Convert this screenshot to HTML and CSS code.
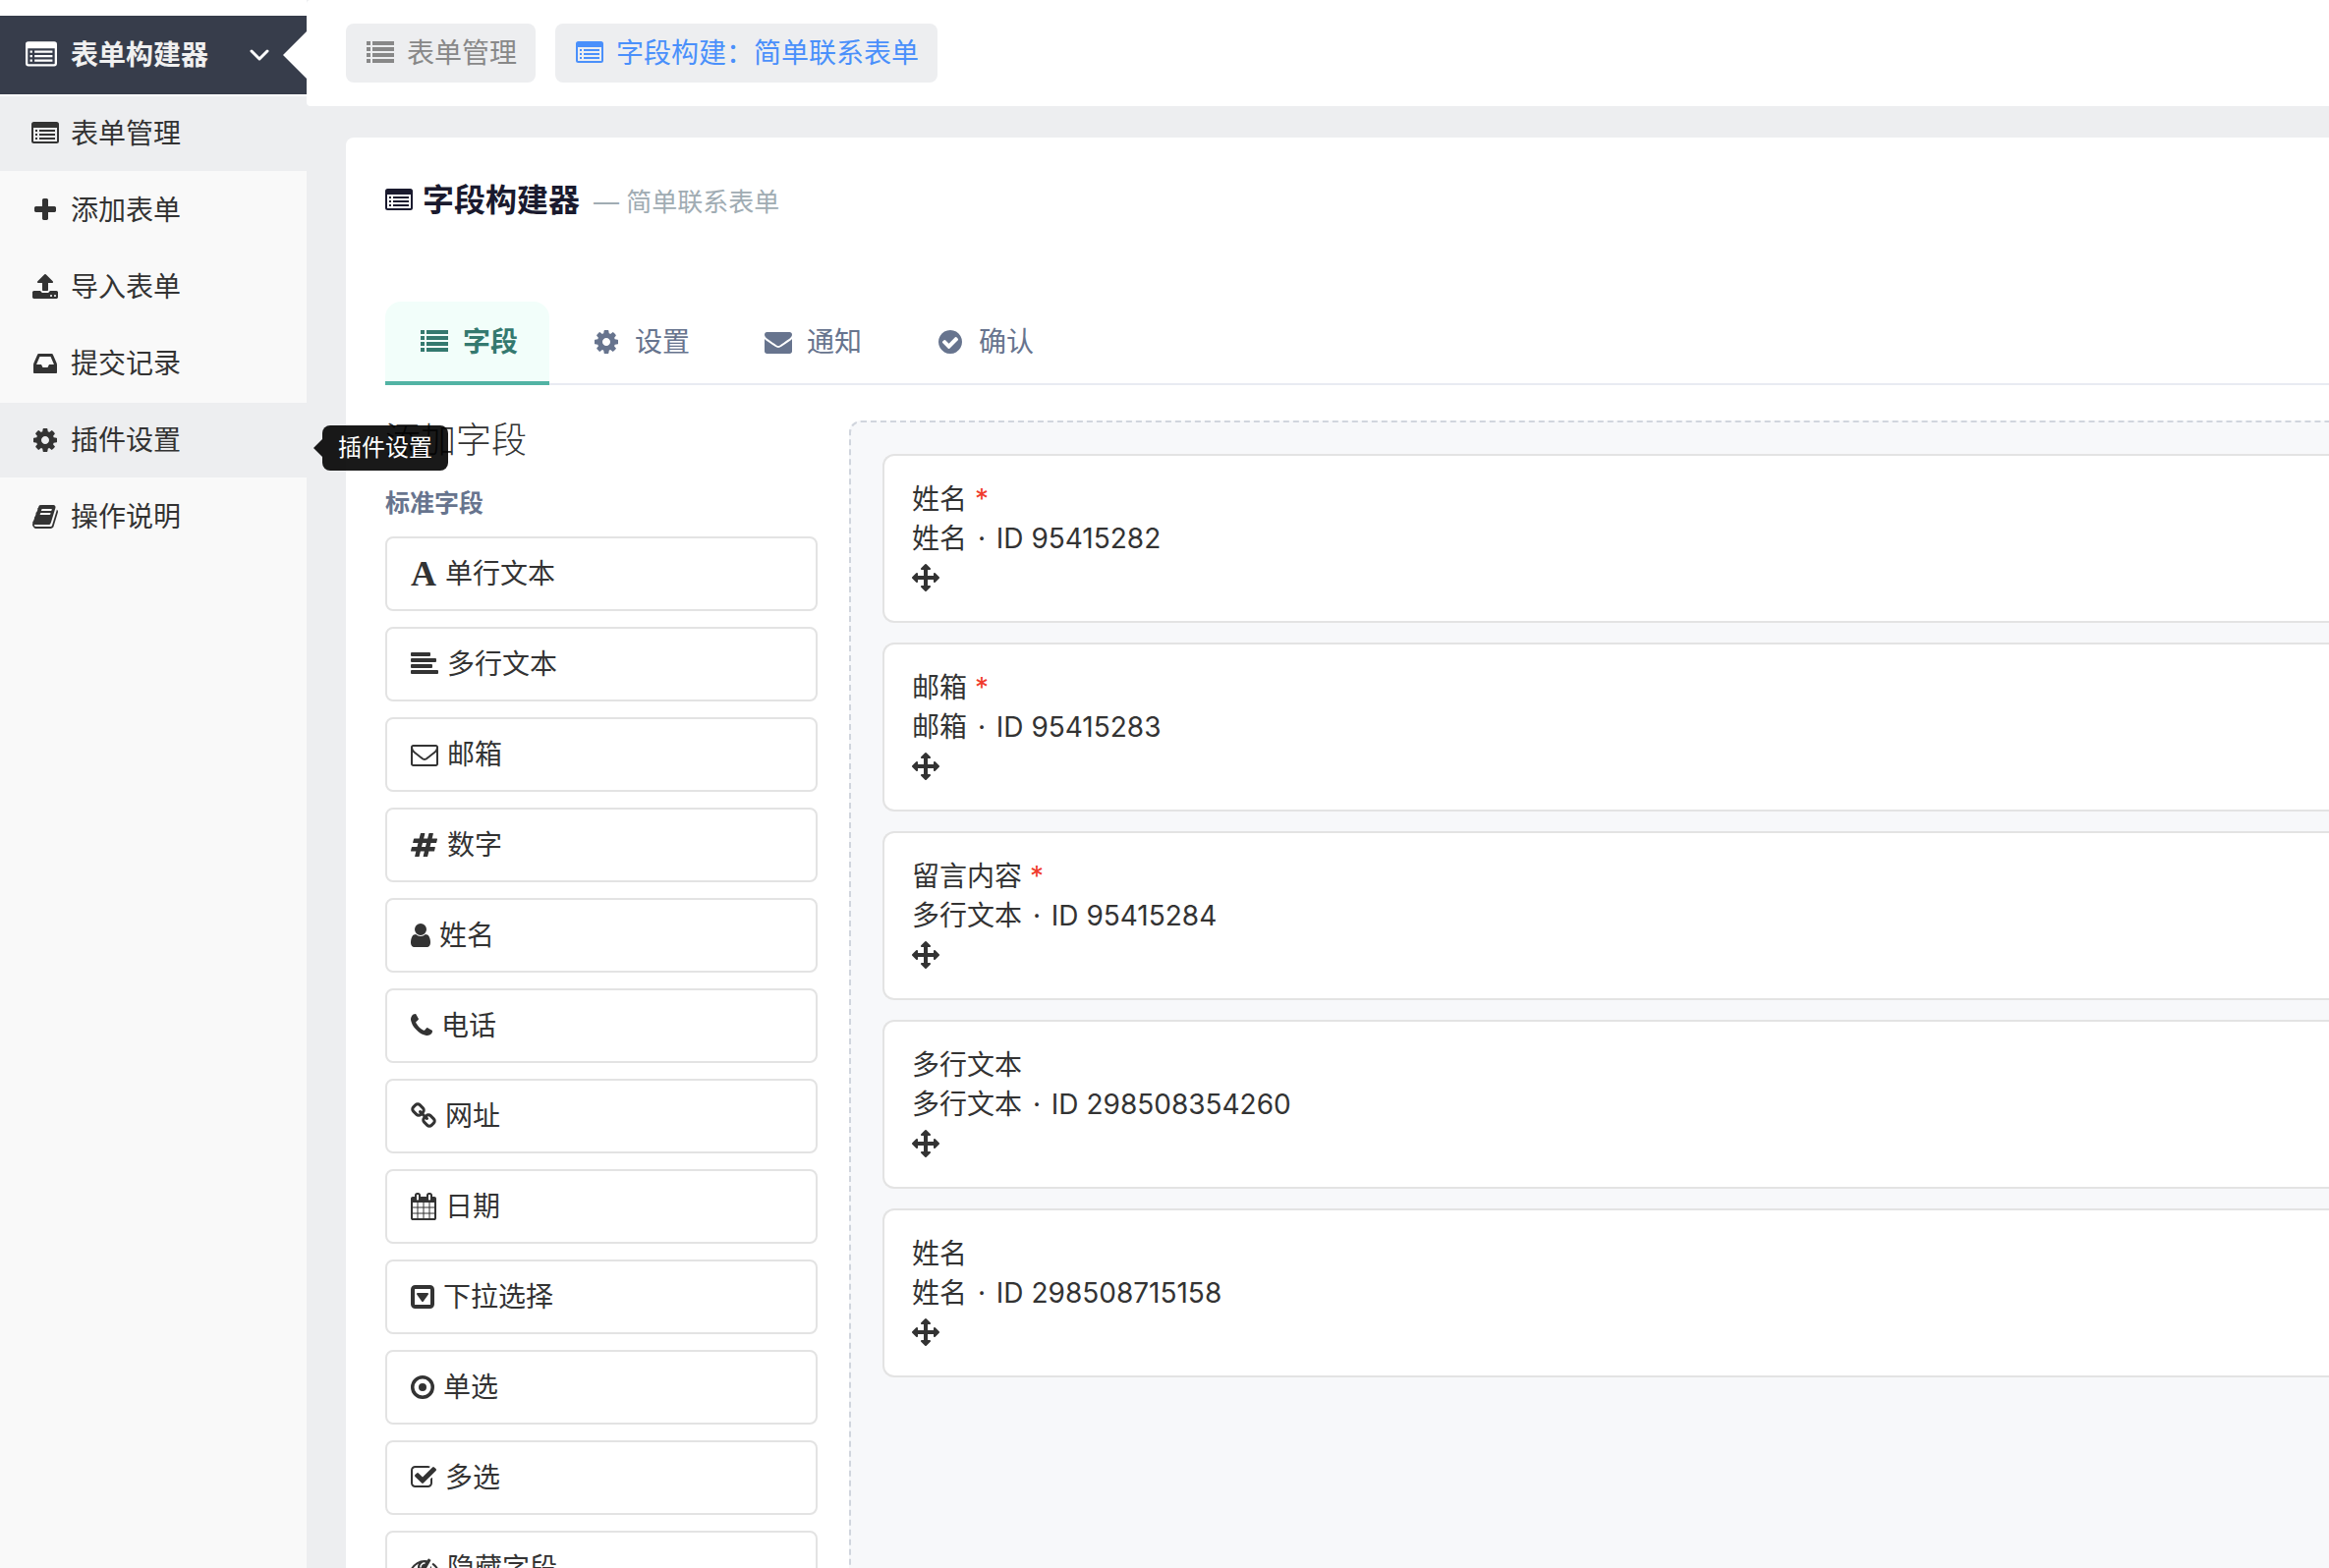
FILE: index.html
```html
<!DOCTYPE html>
<html lang="zh-CN">
<head>
<meta charset="utf-8">
<meta name="viewport" content="width=device-width, initial-scale=1">
<title>字段构建器</title>
<link rel="stylesheet" href="styles.css">
</head>
<body>
<svg class="sprite" aria-hidden="true">
  <symbol id="list-alt" viewBox="0 0 28 28"><path fill-rule="evenodd" d="M2.500 2h23A2.500 2.500 0 0 1 28 4.500v17a2.500 2.500 0 0 1-2.500 2.500h-23A2.500 2.500 0 0 1 0 21.500v-17A2.500 2.500 0 0 1 2.500 2zM2 8v13.500a.5.5 0 0 0 .5.5h23a.5.5 0 0 0 .5-.5V8zM4 10h2v2H4zM8 10h16v2H8zM4 14h2v2H4zM8 14h16v2H8zM4 18h2v2H4zM8 18h16v2H8z"/></symbol>
  <symbol id="list" viewBox="0 0 28 28"><path d="M0 2h4v4H0zM6 2h22v4H6zM0 8h4v4H0zM6 8h22v4H6zM0 14h4v4H0zM6 14h22v4H6zM0 20h4v4H0zM6 20h22v4H6z"/></symbol>
  <symbol id="plus" viewBox="0 0 1792 1792"><path d="M1600 736v192q0 40-28 68t-68 28h-416v416q0 40-28 68t-68 28h-192q-40 0-68-28t-28-68v-416h-416q-40 0-68-28t-28-68v-192q0-40 28-68t68-28h416v-416q0-40 28-68t68-28h192q40 0 68 28t28 68v416h416q40 0 68 28t28 68z"/></symbol>
  <symbol id="upload" viewBox="0 0 1792 1792"><path d="M1344 1472q0-26-19-45t-45-19-45 19-19 45 19 45 45 19 45-19 19-45zm256 0q0-26-19-45t-45-19-45 19-19 45 19 45 45 19 45-19 19-45zm128-224v320q0 40-28 68t-68 28h-1472q-40 0-68-28t-28-68v-320q0-40 28-68t68-28h427q21 56 70.500 92t110.500 36h256q61 0 110.500-36t70.500-92h427q40 0 68 28t28 68zm-325-648q-17 40-59 40h-256v448q0 26-19 45t-45 19h-256q-26 0-45-19t-19-45v-448h-256q-42 0-59-40-17-39 14-69l448-448q18-19 45-19t45 19l448 448q31 30 14 69z"/></symbol>
  <symbol id="inbox" viewBox="0 0 1792 1792"><path d="M1151 960h316q-1-3-2.500-8.500t-2.500-7.500l-212-496h-708l-212 496q-1 3-2.500 8.500t-2.500 7.500h316l95 192h320zm513 30v482q0 26-19 45t-45 19h-1408q-26 0-45-19t-19-45v-482q0-62 25-123l238-552q10-25 36.500-42t52.500-17h832q26 0 52.500 17t36.500 42l238 552q25 61 25 123z"/></symbol>
  <symbol id="cog" viewBox="0 0 1792 1792"><path d="M1152 896q0-106-75-181t-181-75-181 75-75 181 75 181 181 75 181-75 75-181zm512-109v222q0 12-8 23t-20 13l-185 28q-19 54-39 91 35 50 107 138 10 12 10 25t-9 23q-27 37-99 108t-94 71q-12 0-26-9l-138-108q-44 23-91 38-16 136-29 186-7 28-36 28h-222q-14 0-24.500-8.500t-11.500-21.500l-28-184q-49-16-90-37l-141 107q-10 9-25 9-14 0-25-11-126-114-165-168-7-10-7-23 0-12 8-23 15-21 51-66.500t54-70.500q-27-50-41-99l-183-27q-13-2-21-12.500t-8-23.500v-222q0-12 8-23t19-13l186-28q14-46 39-92-40-57-107-138-10-12-10-24 0-10 9-23 26-36 98.500-107.500t94.500-71.500q13 0 26 10l138 107q44-23 91-38 16-136 29-186 7-28 36-28h222q14 0 24.500 8.500t11.500 21.500l28 184q49 16 90 37l142-107q9-9 24-9 13 0 25 10 129 119 165 170 7 8 7 22 0 12-8 23-15 21-51 66.500t-54 70.500q26 50 41 98l183 28q13 2 21 12.500t8 23.500z"/></symbol>
  <symbol id="book" viewBox="0 0 1792 1792"><path d="M1703 478q40 57 18 129l-275 906q-19 64-76.500 107.500t-122.500 43.500h-923q-77 0-148.500-53.500t-99.500-131.500q-24-67-2-127 0-4 3-27t4-37q1-8-3-21.500t-3-19.500q2-11 8-21t16.500-23.500 16.500-23.500q23-38 45-91.500t30-91.500q3-10 .5-30t-.5-28q3-11 17-28t17-23q21-36 42-92t25-90q1-9-2.500-32t.5-28q4-13 22-30.500t22-22.500q19-26 42.500-84.500t27.500-96.500q1-8-3-25.500t-2-26.500q2-8 9-18t18-23 17-21q8-12 16.500-30.500t15-35 16-36 19.500-32 26.500-23.500 36-11.500 47.500 5.500l-1 3q38-9 51-9h761q74 0 114 56t18 130l-274 906q-36 119-71.500 153.500t-128.500 34.500h-869q-27 0-38 15-11 16-1 43 24 70 144 70h923q29 0 56-15.500t35-41.500l300-987q7-22 5-57 38 15 59 43zm-1064 2q-4 13 2 22.500t20 9.500h608q13 0 25.500-9.500t16.500-22.500l21-64q4-13-2-22.500t-20-9.500h-608q-13 0-25.500 9.500t-16.500 22.500zm-83 256q-4 13 2 22.500t20 9.500h608q13 0 25.500-9.500t16.500-22.500l21-64q4-13-2-22.500t-20-9.500h-608q-13 0-25.500 9.500t-16.500 22.500z"/></symbol>
  <symbol id="envelope" viewBox="0 0 1792 1792"><path d="M1792 710v794q0 66-47 113t-113 47h-1472q-66 0-113-47t-47-113v-794q44 49 101 87 362 246 497 345 57 42 92.500 65.500t94.500 48 110 24.500h2q51 0 110-24.500t94.500-48 92.500-65.500q170-123 498-345 57-39 100-87zm0-294q0 79-49 151t-122 123q-376 261-468 325-10 7-42.500 31t-54 38.500-52 32.500-57.500 27-50 9h-2q-23 0-50-9t-57.500-27-52-32.500-54-38.500-42.500-31q-91-64-262-182.500t-205-142.500q-62-42-117-115.500t-55-136.500q0-78 41.500-130t118.500-52h1472q65 0 112.500 47t47.500 113z"/></symbol>
  <symbol id="check-circle" viewBox="0 0 1792 1792"><path d="M1412 734q0-28-18-46l-91-90q-19-19-45-19t-45 19l-408 407-226-226q-19-19-45-19t-45 19l-91 90q-18 18-18 46 0 27 18 45l362 362q19 19 45 19 27 0 46-19l543-543q18-18 18-45zm252 162q0 209-103 385.500t-279.500 279.500-385.500 103-385.500-103-279.500-279.500-103-385.500 103-385.500 279.500-279.500 385.500-103 385.500 103 279.500 279.500 103 385.500z"/></symbol>
  <symbol id="align-left" viewBox="0 0 28 28"><rect y="2" width="20" height="4" rx="1"/><rect y="8" width="26" height="4" rx="1"/><rect y="14" width="22" height="4" rx="1"/><rect y="20" width="28" height="4" rx="1"/></symbol>
  <symbol id="envelope-o" viewBox="0 0 1792 1792"><path d="M1664 1504v-768q-32 36-69 66-268 206-426 338-51 43-83 67t-86.500 48.500-102.500 24.500h-2q-48 0-102.500-24.500t-86.500-48.500-83-67q-158-132-426-338-37-30-69-66v768q0 13 9.500 22.500t22.500 9.500h1472q13 0 22.500-9.500t9.500-22.500zm0-1051v-24.500l-.5-13-3-12.500-5.500-9-9-7.500-14-2.500h-1472q-13 0-22.500 9.500t-9.500 22.500q0 168 147 284 193 152 401 317 6 5 35 29.500t46 37.500 44.500 31.500 50.500 27.500 43 9h2q20 0 43-9t50.500-27.500 44.500-31.500 46-37.500 35-29.500q208-165 401-317 54-43 100.500-115.500t46.500-131.500zm128-37v1088q0 66-47 113t-113 47h-1472q-66 0-113-47t-47-113v-1088q0-66 47-113t113-47h1472q66 0 113 47t47 113z"/></symbol>
  <symbol id="hashtag" viewBox="0 0 1792 1792"><path d="M959 1024l64-256h-254l-64 256h254zm768-504l-56 224q-7 24-31 24h-327l-64 256h311q15 0 25 12 10 14 6 28l-56 224q-5 24-31 24h-327l-81 328q-7 24-31 24h-224q-16 0-26-12-9-12-6-28l78-312h-254l-81 328q-7 24-31 24h-225q-15 0-25-12-9-12-6-28l78-312h-311q-15 0-25-12-9-12-6-28l56-224q7-24 31-24h327l64-256h-311q-15 0-25-12-10-14-6-28l56-224q5-24 31-24h327l81-328q7-24 32-24h224q15 0 25 12 9 12 6 28l-78 312h254l81-328q7-24 32-24h224q15 0 25 12 9 12 6 28l-78 312h311q15 0 25 12 9 12 6 28z"/></symbol>
  <symbol id="user" viewBox="256 0 1280 1792"><path d="M1536 1399q0 109-62.500 187t-150.500 78h-854q-88 0-150.500-78t-62.500-187q0-85 8.500-160.500t31.500-152 58.500-131 94-89 134.500-34.500q131 128 313 128t313-128q76 0 134.500 34.500t94 89 58.500 131 31.500 152 8.500 160.500zm-256-887q0 159-112.500 271.500t-271.500 112.500-271.500-112.500-112.500-271.500 112.500-271.500 271.500-112.500 271.500 112.500 112.500 271.500z"/></symbol>
  <symbol id="phone" viewBox="192 0 1408 1792"><path d="M1600 1240q0 27-10 70.500t-21 68.500q-21 50-122 106-94 51-186 51-27 0-52.500-3.500t-57.500-12.500-47.500-14.500-55.500-20.500-49-18q-98-35-175-83-128-79-264.500-215.500t-215.500-264.500q-48-77-83-175-3-9-18-49t-20.500-55.500-14.500-47.500-12.500-57.500-3.500-52.500q0-92 51-186 56-101 106-122 25-11 68.500-21t70.500-10q14 0 21 3 18 6 53 76 11 19 30 54t35 63.500 31 53.500q3 4 17.500 25t21.500 35.500 7 28.500q0 20-28.500 50t-62 55-62 53-28.500 46q0 9 5 22.500t8.500 20.500 14 24 11.500 19q76 137 174 235t235 174q2 1 19 11.500t24 14 20.500 8.500 22.500 5q18 0 46-28.500t53-62 55-62 50-28.500q14 0 28.500 7t35.500 21.500 25 17.500q25 15 53.500 31t63.500 35 54 30q70 35 76 53 3 7 3 21z"/></symbol>
  <symbol id="chain" viewBox="64 0 1664 1792"><path d="M1520 1216q0-40-28-68l-208-208q-28-28-68-28-42 0-72 32 3 3 19 18.500t21.500 21.500 15 19 13 25.500 3.500 27.500q0 40-28 68t-68 28q-15 0-27.500-3.500t-25.500-13-19-15-21.500-21.500-18.500-19q-33 31-33 73 0 40 28 68l206 207q27 27 68 27 40 0 68-26l147-146q28-28 28-67zm-703-705q0-40-28-68l-206-207q-28-28-68-28-39 0-68 27l-147 146q-28 28-28 67 0 40 28 68l208 208q27 27 68 27 42 0 72-31-3-3-19-18.500t-21.500-21.500-15-19-13-25.500-3.500-27.500q0-40 28-68t68-28q15 0 27.500 3.500t25.500 13 19 15 21.500 21.500 18.500 19q33-31 33-73zm895 705q0 120-85 203l-147 146q-83 83-203 83-121 0-204-85l-206-207q-83-83-83-203 0-123 88-209l-88-88q-86 88-208 88-120 0-204-84l-208-208q-84-84-84-204t85-203l147-146q83-83 203-83 121 0 204 85l206 207q83 83 83 203 0 123-88 209l88 88q86-88 208-88 120 0 204 84l208 208q84 84 84 204z"/></symbol>
  <symbol id="calendar" viewBox="64 0 1664 1792"><path d="M192 1664h288v-288h-288v288zm352 0h320v-288h-320v288zm-352-352h288v-320h-288v320zm352 0h320v-320h-320v320zm-352-384h288v-288h-288v288zm736 736h320v-288h-320v288zm-384-736h320v-288h-320v288zm768 736h288v-288h-288v288zm-384-352h320v-320h-320v320zm-352-864v-288q0-13-9.500-22.500t-22.500-9.500h-64q-13 0-22.500 9.500t-9.500 22.500v288q0 13 9.500 22.500t22.500 9.500h64q13 0 22.500-9.500t9.500-22.500zm736 864h288v-320h-288v320zm-384-384h320v-288h-320v288zm384 0h288v-288h-288v288zm32-480v-288q0-13-9.500-22.500t-22.500-9.500h-64q-13 0-22.500 9.500t-9.500 22.500v288q0 13 9.500 22.500t22.500 9.500h64q13 0 22.500-9.500t9.500-22.500zm384-64v1280q0 52-38 90t-90 38h-1408q-52 0-90-38t-38-90v-1280q0-52 38-90t90-38h128v-96q0-66 47-113t113-47h64q66 0 113 47t47 113v96h384v-96q0-66 47-113t113-47h64q66 0 113 47t47 113v96h128q52 0 90 38t38 90z"/></symbol>
  <symbol id="caret-square" viewBox="0 0 24 28"><path fill-rule="evenodd" d="M4.500 2h15A4.500 4.500 0 0 1 24 6.500v15a4.500 4.500 0 0 1-4.500 4.500h-15A4.500 4.500 0 0 1 0 21.500v-15A4.500 4.500 0 0 1 4.500 2zM4.500 6a.5.5 0 0 0-.5.5v15a.5.5 0 0 0 .5.5h15a.5.5 0 0 0 .5-.5v-15a.5.5 0 0 0-.5-.5zM7 10h10q1.600.2.900 1.600l-5 7q-.9 1-1.800 0l-5-7Q5.400 10.200 7 10z"/></symbol>
  <symbol id="dot-circle" viewBox="0 0 24 28"><path fill-rule="evenodd" d="M12 2a12 12 0 1 1 0 24a12 12 0 1 1 0-24zM12 5.500a8.500 8.500 0 1 0 0 17a8.500 8.500 0 1 0 0-17zM12 10a4 4 0 1 1 0 8a4 4 0 1 1 0-8z"/></symbol>
  <symbol id="check-square" viewBox="64 0 1664 1792"><path d="M1472 930v318q0 119-84.500 203.500t-203.500 84.500h-832q-119 0-203.500-84.500t-84.500-203.500v-832q0-119 84.500-203.500t203.500-84.500h832q63 0 117 25 15 7 18 23 3 17-9 29l-49 49q-10 10-23 10-3 0-9-2-23-6-45-6h-832q-66 0-113 47t-47 113v832q0 66 47 113t113 47h832q66 0 113-47t47-113v-254q0-13 9-22l64-64q10-10 23-10 6 0 12 3 20 8 20 29zm231-489l-814 814q-24 24-57 24t-57-24l-430-430q-24-24-24-57t24-57l110-110q24-24 57-24t57 24l263 263 647-647q24-24 57-24t57 24l110 110q24 24 24 57t-24 57z"/></symbol>
  <symbol id="eye-slash" viewBox="0 0 1792 1792"><path d="M555 1335l78-141q-87-63-136-159t-49-203q0-121 61-225-229 117-381 353 167 258 427 375zm389-759q0-20-14-34t-34-14q-125 0-214.500 89.500t-89.500 214.500q0 20 14 34t34 14 34-14 14-34q0-86 61-147t147-61q20 0 34-14t14-34zm363-191q0 7-1 9-105 188-315 566t-316 567l-49 89q-10 16-28 16-12 0-134-70-16-10-16-28 0-12 44-87-143-65-263.500-173t-208.500-245q-20-31-20-69t20-69q153-235 380-371t496-136q89 0 180 17l54-97q10-16 28-16 5 0 18 6t31 15.500 33 18.500 31.500 18.500 19.500 11.500q16 10 16 27zm37 447q0 139-79 253.500t-209 164.500l280-502q8 45 8 84zm448 128q0 35-20 69-39 64-109 145-150 172-347.500 267t-419.500 95l74-132q212-18 392.500-137t301.500-307q-115-179-282-294l63-112q95 64 182.500 153t144.500 184q20 34 20 69z"/></symbol>
  <symbol id="arrows" viewBox="0 0 1792 1792"><path d="M1792 896q0 26-19 45l-256 256q-19 19-45 19t-45-19-19-45v-128h-384v384h128q26 0 45 19t19 45-19 45l-256 256q-19 19-45 19t-45-19l-256-256q-19-19-19-45t19-45 45-19h128v-384h-384v128q0 26-19 45t-45 19-45-19l-256-256q-19-19-19-45t19-45l256-256q19-19 45-19t45 19 19 45v128h384v-384h-128q-26 0-45-19t-19-45 19-45l256-256q19-19 45-19t45 19l256 256q19 19 19 45t-19 45-45 19h-128v384h384v-128q0-26 19-45t45-19 45 19l256 256q19 19 19 45z"/></symbol>
</svg>

<div class="layout">
  <aside class="sidebar">
    <button class="menu-head" type="button" aria-expanded="true">
      <svg class="icon icon-lg"><use href="#list-alt"/></svg>
      <span>表单构建器</span>
      <svg class="chevron" viewBox="0 0 20 14"><path d="M2 3l8 8 8-8"/></svg>
    </button>
    <nav class="menu">
      <a class="menu-item current" href="#forms"><span class="icon-cell"><svg class="icon"><use href="#list-alt"/></svg></span>表单管理</a>
      <a class="menu-item" href="#add"><span class="icon-cell"><svg class="icon"><use href="#plus"/></svg></span>添加表单</a>
      <a class="menu-item" href="#import"><span class="icon-cell"><svg class="icon"><use href="#upload"/></svg></span>导入表单</a>
      <a class="menu-item" href="#entries"><span class="icon-cell"><svg class="icon"><use href="#inbox"/></svg></span>提交记录</a>
      <a class="menu-item hovered" href="#plugin" aria-describedby="tip"><span class="icon-cell"><svg class="icon"><use href="#cog"/></svg></span>插件设置<span class="tooltip" id="tip" role="tooltip">插件设置</span></a>
      <a class="menu-item" href="#help"><span class="icon-cell"><svg class="icon"><use href="#book"/></svg></span>操作说明</a>
    </nav>
  </aside>

  <main class="main">
    <nav class="topbar">
      <a class="crumb" href="#forms"><svg class="icon"><use href="#list"/></svg>表单管理</a>
      <a class="crumb active" href="#fields"><svg class="icon"><use href="#list-alt"/></svg>字段构建：简单联系表单</a>
    </nav>

    <section class="panel">
      <header class="panel-head">
        <svg class="icon"><use href="#list-alt"/></svg>
        <h1 class="title">字段构建器</h1>
        <span class="subtitle">— 简单联系表单</span>
      </header>

      <nav class="tabs">
        <a class="tab active" href="#fields"><span class="icon-cell"><svg class="icon"><use href="#list"/></svg></span>字段</a>
        <a class="tab" href="#settings"><span class="icon-cell"><svg class="icon"><use href="#cog"/></svg></span>设置</a>
        <a class="tab" href="#notify"><span class="icon-cell"><svg class="icon"><use href="#envelope"/></svg></span>通知</a>
        <a class="tab" href="#confirm"><span class="icon-cell"><svg class="icon"><use href="#check-circle"/></svg></span>确认</a>
      </nav>

      <div class="builder">
        <section class="palette">
          <h2 class="palette-title">添加字段</h2>
          <h3 class="palette-group">标准字段</h3>
          <div class="palette-list">
            <button class="field-btn" type="button"><span class="letter-icon" aria-hidden="true">A</span>单行文本</button>
            <button class="field-btn" type="button"><svg class="icon"><use href="#align-left"/></svg>多行文本</button>
            <button class="field-btn" type="button"><svg class="icon"><use href="#envelope-o"/></svg>邮箱</button>
            <button class="field-btn" type="button"><svg class="icon"><use href="#hashtag"/></svg>数字</button>
            <button class="field-btn" type="button"><svg class="icon w20"><use href="#user"/></svg>姓名</button>
            <button class="field-btn" type="button"><svg class="icon w22"><use href="#phone"/></svg>电话</button>
            <button class="field-btn" type="button"><svg class="icon w26"><use href="#chain"/></svg>网址</button>
            <button class="field-btn" type="button"><svg class="icon w26"><use href="#calendar"/></svg>日期</button>
            <button class="field-btn" type="button"><svg class="icon w24"><use href="#caret-square"/></svg>下拉选择</button>
            <button class="field-btn" type="button"><svg class="icon w24"><use href="#dot-circle"/></svg>单选</button>
            <button class="field-btn" type="button"><svg class="icon w26"><use href="#check-square"/></svg>多选</button>
            <button class="field-btn" type="button"><svg class="icon"><use href="#eye-slash"/></svg>隐藏字段</button>
          </div>
        </section>

        <section class="canvas">
          <article class="field"><div>姓名 <span class="required">*</span></div><div>姓名 <span class="dot">·</span> ID 95415282</div><div class="handle"><svg class="icon"><use href="#arrows"/></svg></div></article>
          <article class="field"><div>邮箱 <span class="required">*</span></div><div>邮箱 <span class="dot">·</span> ID 95415283</div><div class="handle"><svg class="icon"><use href="#arrows"/></svg></div></article>
          <article class="field"><div>留言内容 <span class="required">*</span></div><div>多行文本 <span class="dot">·</span> ID 95415284</div><div class="handle"><svg class="icon"><use href="#arrows"/></svg></div></article>
          <article class="field"><div>多行文本</div><div>多行文本 <span class="dot">·</span> ID 298508354260</div><div class="handle"><svg class="icon"><use href="#arrows"/></svg></div></article>
          <article class="field"><div>姓名</div><div>姓名 <span class="dot">·</span> ID 298508715158</div><div class="handle"><svg class="icon"><use href="#arrows"/></svg></div></article>
        </section>
      </div>
    </section>
  </main>
</div>
</body>
</html>
```
FILE: styles.css
```css
* { box-sizing: border-box; }

body {
  margin: 0;
  background: #edeef0;
  color: #333;
  font-family: Inter, "Noto Sans CJK SC", sans-serif;
  font-size: 28px;
  line-height: 40px;
}

a { color: inherit; text-decoration: none; }
button { font: inherit; color: inherit; text-align: left; cursor: pointer; }
h1, h2, h3 { margin: 0; }

.sprite { position: absolute; width: 0; height: 0; }

/* Icons */
.icon { display: block; flex: none; width: 28px; height: 28px; fill: currentColor; }
.icon-lg { width: 32px; height: 32px; }
.w20 { width: 20px; }
.w22 { width: 22px; }
.w24 { width: 24px; }
.w26 { width: 26px; }
.icon-cell { display: flex; justify-content: center; flex: none; width: 36px; }
.letter-icon { font-family: "Liberation Serif", serif; font-weight: 700; font-size: 36px; width: 26px; }

.layout { display: flex; height: 100vh; }

/* Sidebar */
.sidebar {
  position: relative;
  z-index: 1;
  flex: none;
  width: 312px;
  padding-top: 16px;
  background: linear-gradient(#fff 98px, #f9f9f9 98px);
}

.menu-head {
  position: relative;
  display: flex;
  align-items: center;
  gap: 14px;
  width: 100%;
  height: 80px;
  padding: 0 38px 0 26px;
  border: 0;
  background: #373d4b;
  color: #fff;
  font-weight: 700;
}
.menu-head span { color: #f0f0f0; }
.menu-head::after {
  content: "";
  position: absolute;
  top: 16px;
  right: 0;
  border: 24px solid transparent;
  border-left-width: 0;
  border-right-color: #fff;
}
.chevron {
  width: 20px;
  height: 14px;
  margin-left: auto;
  fill: none;
  stroke: #fff;
  stroke-width: 3;
  stroke-linecap: round;
  stroke-linejoin: round;
}

.menu { display: flex; flex-direction: column; gap: 2px; padding-top: 2px; }
.menu-item {
  position: relative;
  display: flex;
  align-items: center;
  gap: 8px;
  height: 76px;
  padding-left: 28px;
}
.menu-item.current, .menu-item.hovered { background: #edeef0; }

.tooltip {
  position: absolute;
  left: 328px;
  top: 23px;
  padding: 5px 16px;
  border-radius: 8px;
  background: rgba(0, 0, 0, .9);
  color: #fff;
  font-size: 24px;
  line-height: 36px;
  white-space: nowrap;
}
.tooltip::before {
  content: "";
  position: absolute;
  top: 14px;
  right: 100%;
  border: 9px solid transparent;
  border-left-width: 0;
  border-right-color: rgba(0, 0, 0, .9);
}

/* Main column */
.main {
  display: flex;
  flex-direction: column;
  flex: 1;
  min-width: 0;
  overflow-y: auto;
  scrollbar-width: none;
}

.topbar {
  display: flex;
  flex: none;
  gap: 20px;
  padding: 24px 40px;
  border-radius: 4px 0 0 4px;
  background: #fff;
}
.crumb {
  display: flex;
  align-items: center;
  gap: 13px;
  height: 60px;
  padding: 0 19px 0 21px;
  border-radius: 8px;
  background: #edeef0;
  color: #888;
}
.crumb.active { color: #4a90fb; }

.panel {
  display: flex;
  flex-direction: column;
  flex: 1 0 auto;
  margin: 32px 0 0 40px;
  padding: 40px 0 40px 40px;
  border-radius: 8px 0 0 0;
  background: #fff;
}

.panel-head { display: flex; align-items: center; gap: 10px; height: 48px; color: #1a1a2e; }
.title { font-size: 32px; line-height: 48px; font-weight: 700; }
.subtitle { padding: 4px 0 0 4px; color: #a0acb3; font-size: 26px; }

.tabs {
  display: flex;
  gap: 8px;
  margin-top: 79px;
  box-shadow: inset 0 -2px #e8ebf2;
}
.tab {
  display: flex;
  align-items: center;
  gap: 11px;
  height: 85px;
  padding: 0 32px;
  border-bottom: 4px solid transparent;
  color: #67748e;
}
.tab.active {
  border-color: #52b3a4;
  border-radius: 16px 16px 0 0;
  background: #f2fefa;
  color: #34796f;
  font-weight: 700;
}

.builder { display: flex; flex: 1; gap: 32px; margin-top: 36px; }

/* Field palette */
.palette { flex: none; width: 440px; }
.palette-title { font-size: 36px; line-height: 40px; font-weight: 300; }
.palette-group { margin: 24px 0 14px; color: #67748e; font-size: 25px; font-weight: 700; }
.palette-list { display: flex; flex-direction: column; gap: 16px; }
.field-btn {
  display: flex;
  align-items: center;
  gap: 9px;
  height: 76px;
  padding: 0 24px;
  border: 2px solid #e3e3e3;
  border-radius: 8px;
  background: #fff;
}

/* Form canvas */
.canvas {
  display: flex;
  flex-direction: column;
  flex: 1;
  gap: 20px;
  min-width: 0;
  padding: 32px 0 32px 32px;
  border: 2px dashed #d0d5dd;
  border-right: 0;
  border-radius: 12px 0 0 12px;
  background: #f7f8fa;
}
.field {
  padding: 24px 28px;
  border: 2px solid #e3e3e3;
  border-right: 0;
  border-radius: 12px 0 0 12px;
  background: #fff;
}
.required { color: #f03b2d; }
.dot { padding: 0 3px; }
.handle { display: flex; align-items: center; height: 40px; }
```
